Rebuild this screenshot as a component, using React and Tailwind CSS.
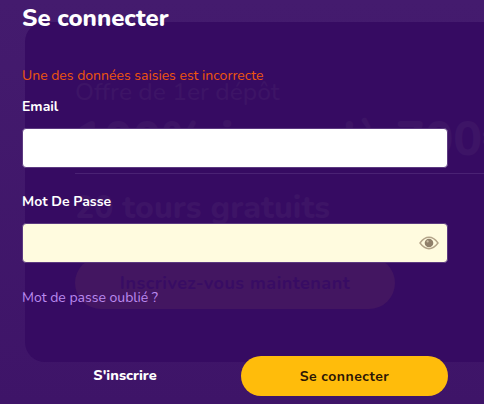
import React from 'react';

const EyeIcon = () => (
    <svg viewBox="0 0 20 14" className="absolute right-[9px] top-[13px] w-[20px] h-[14px]">
        <path d="M1 7C4 3 7 1.3 10 1.3S16 3 19 7C16 11 13 12.7 10 12.7S4 11 1 7Z" fill="none" stroke="#b3a388" strokeWidth="1.4" />
        <circle cx="10" cy="7" r="4.3" fill="#8f7f69" />
        <circle cx="8.6" cy="5.4" r="1.1" fill="#c9bba2" />
    </svg>
);

const Promo = () => (
    <div className="absolute left-[25px] top-[22px] w-[520px] h-[340px] rounded-l-[20px] bg-[#360b62] overflow-hidden">
        <div className="pl-[50px] pt-[52px] text-[#3d1466] whitespace-nowrap">
            <p className="text-[24.5px] leading-[36px] font-medium">Offre de 1er dépôt</p>
            <p className="mt-[5px] text-[48px] leading-[48px] font-extrabold">100% jusqu'à 700€</p>
            <div className="mt-[10px] h-px bg-[#4a2274]" />
            <p className="mt-[12px] text-[32px] leading-[44px] font-extrabold">20 tours gratuits</p>
            <div className="mt-[27px] w-[320px] h-[52px] rounded-full bg-[#431661] flex items-center justify-center text-[18px] tracking-[0.5px] font-bold text-[#380c64]">
                Inscrivez-vous maintenant
            </div>
        </div>
    </div>
);

export default function App() {
    return (
        <div className="relative w-[484px] h-[404px] overflow-hidden bg-gradient-to-b from-[#441b6e] to-[#3e1468] font-['Nunito','Lato','Noto_Sans',sans-serif]">
            <Promo />
            <div className="relative h-full px-[22px] flex flex-col">
                <h1 className="text-[24px] leading-[36px] font-extrabold text-white">Se connecter</h1>

                <p className="mt-[30px] text-[14px] leading-[20px] text-[#f0560c]">Une des données saisies est incorrecte</p>

                <label className="mt-[11px] text-[14px] leading-[20px] font-bold text-white">Email</label>
                <input type="text" className="mt-[11px] w-[426px] h-[40px] rounded-[4px] bg-white border border-[#5c3a80]" />

                <label className="mt-[24px] text-[14px] leading-[20px] font-bold text-white">Mot De Passe</label>
                <div className="relative mt-[11px] w-[426px]">
                    <input type="password" className="w-full h-[40px] rounded-[4px] bg-[#fffbdf] border border-[#5c3a80]" />
                    <EyeIcon />
                </div>

                <a className="mt-[25px] text-[14px] leading-[20px] text-[#bb8aef]">Mot de passe oublié ?</a>

                <div className="mt-[48px] flex items-center w-[426px]">
                    <button className="w-[206px] text-[14.5px] font-extrabold text-white text-center">S'inscrire</button>
                    <button className="ml-[13px] w-[207px] h-[40px] rounded-full bg-[#ffbc0b] text-[14px] font-bold tracking-[0.5px] text-[#2b1505]">Se connecter</button>
                </div>
            </div>
        </div>
    );
}
